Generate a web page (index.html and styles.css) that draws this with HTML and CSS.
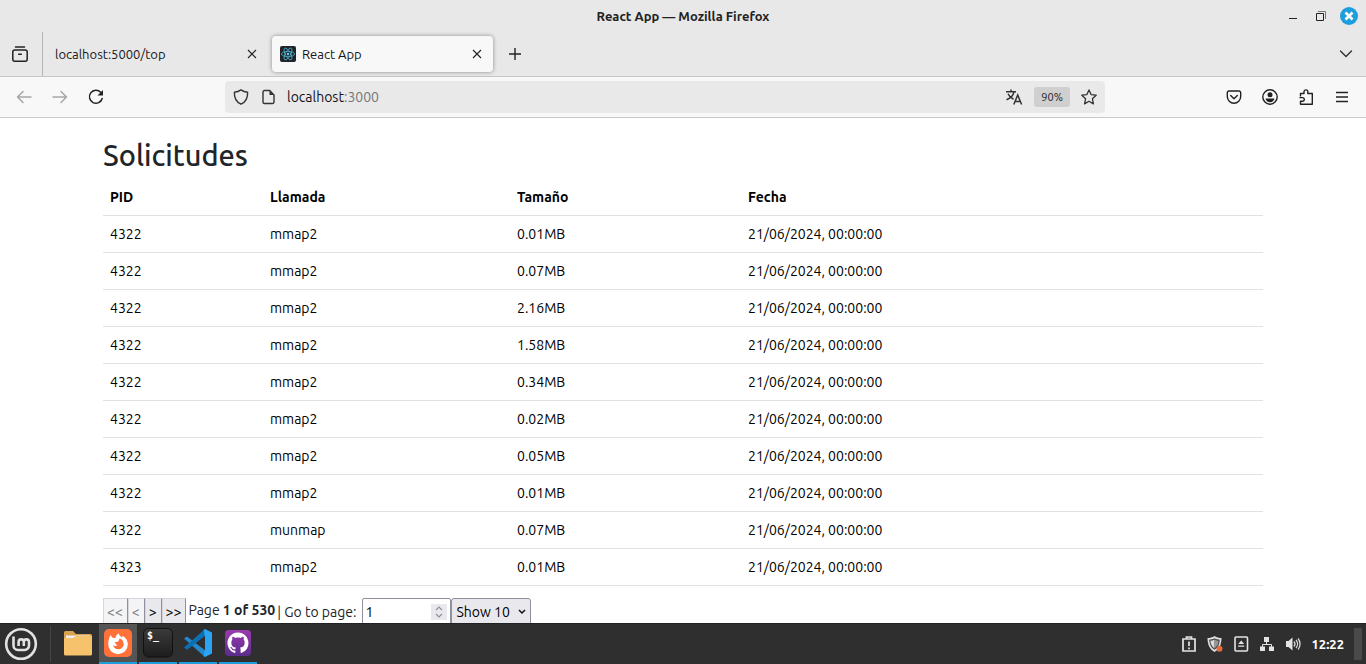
FILE: index.html
```html
<!DOCTYPE html>
<html lang="es">
<head>
<meta charset="utf-8">
<title>React App</title>
<link rel="stylesheet" href="styles.css">
</head>
<body>
<div class="desktop">
  <header class="titlebar">
    <span class="window-title">React App — Mozilla Firefox</span>
    <div class="window-controls">
      <button class="window-btn" aria-label="Minimize"><svg width="18" height="18" viewBox="0 0 18 18"><path d="M5 11.500h8" stroke="#222"/></svg></button>
      <button class="window-btn" aria-label="Restore"><svg width="18" height="18" viewBox="0 0 18 18" fill="none"><path d="M6 4.500h7.500V12" stroke="#777"/><path d="M4.500 6.500h7v7h-7z" stroke="#222"/></svg></button>
      <button class="window-btn" aria-label="Close"><svg width="18" height="18" viewBox="0 0 18 18"><circle cx="9" cy="9" r="9" fill="#1f9ede"/><path d="M5.500 5.500l7 7M12.500 5.500l-7 7" stroke="#fff" stroke-width="2.600"/></svg></button>
    </div>
  </header>

  <nav class="tabbar" aria-label="Tabs">
    <button class="view-btn" aria-label="Firefox View"><svg width="16" height="16" viewBox="0 0 16 16" fill="none" stroke="#222" stroke-width="1.500" stroke-linecap="round"><rect x=".8" y="4" width="14.400" height="11.200" rx="2"/><path d="M3.500 1h9M6.700 8.200h2.600"/></svg></button>
    <div class="tab">
      <span class="tab-label">localhost:5000/top</span>
      <button class="icon-btn" aria-label="Close tab"><svg width="10" height="10" viewBox="0 0 10 10"><path d="M1 1l8 8M9 1L1 9" stroke="#222" stroke-width="1.100"/></svg></button>
    </div>
    <div class="tab tab-active">
      <svg width="16" height="16" viewBox="0 0 16 16"><rect width="16" height="16" rx="2" fill="#20232a"/><g fill="none" stroke="#4fb4cf" stroke-width=".8"><ellipse cx="8" cy="8" rx="6.600" ry="2.600"/><ellipse cx="8" cy="8" rx="6.600" ry="2.600" transform="rotate(60 8 8)"/><ellipse cx="8" cy="8" rx="6.600" ry="2.600" transform="rotate(120 8 8)"/></g><circle cx="8" cy="8" r="1.200" fill="#61dafb"/></svg>
      <span class="tab-label">React App</span>
      <button class="icon-btn" aria-label="Close tab"><svg width="10" height="10" viewBox="0 0 10 10"><path d="M1 1l8 8M9 1L1 9" stroke="#222" stroke-width="1.100"/></svg></button>
    </div>
    <button class="icon-btn new-tab" aria-label="New tab"><svg width="12" height="12" viewBox="0 0 12 12"><path d="M6 0v12M0 6h12" stroke="#222" stroke-width="1.400"/></svg></button>
    <button class="icon-btn list-tabs" aria-label="List all tabs"><svg width="14" height="8" viewBox="0 0 14 8" fill="none"><path d="M1.500 1L7 6.500 12.500 1" stroke="#333" stroke-width="1.400" stroke-linecap="round"/></svg></button>
  </nav>

  <div class="navbar">
    <div class="nav-left">
      <button class="icon-btn" aria-label="Back" disabled><svg width="16" height="14" viewBox="0 0 16 14" fill="none" stroke="#a6a6a6" stroke-width="1.500" stroke-linecap="round" stroke-linejoin="round"><path d="M15 7H1.500M7 1.500L1.500 7 7 12.500"/></svg></button>
      <button class="icon-btn" aria-label="Forward" disabled><svg width="16" height="14" viewBox="0 0 16 14" fill="none" stroke="#a6a6a6" stroke-width="1.500" stroke-linecap="round" stroke-linejoin="round"><path d="M1 7h13.500M9 1.500L14.500 7 9 12.500"/></svg></button>
      <button class="icon-btn" aria-label="Reload"><svg width="16" height="16" viewBox="0 0 16 16" fill="none"><path d="M14.200 9.500A6.500 6.500 0 1 1 12.700 3.300" stroke="#222" stroke-width="1.500" stroke-linecap="round"/><path d="M15 1v5.500H9.500z" fill="#222"/></svg></button>
    </div>
    <div class="urlbar">
      <svg width="16" height="16" viewBox="0 0 16 16" fill="none" stroke="#333" stroke-width="1.400" stroke-linejoin="round"><path d="M8 .9c2 1.500 4.200 2.200 6.600 2.300.3 5.300-1.800 9.700-6.600 12C3.200 12.900 1.100 8.500 1.400 3.200 3.800 3.100 6 2.400 8 .9z"/></svg>
      <svg width="16" height="16" viewBox="0 0 16 16"><path d="M4.500 1.500h5.200L14 6v7a1.500 1.500 0 0 1-1.500 1.500h-8A1.500 1.500 0 0 1 3 13V3A1.500 1.500 0 0 1 4.500 1.500z" fill="none" stroke="#333" stroke-width="1.400"/><path d="M9.500 1.500V6H14z" fill="#333"/></svg>
      <span class="url">localhost<span class="port">:3000</span></span>
      <button class="icon-btn" aria-label="Translate"><svg width="18" height="16" viewBox="0 0 18 16" fill="none" stroke="#333" stroke-width="1.500"><path d="M1 2.800h10M6 .5v2.300M9 2.800C8.200 6.500 5.500 9.200 1.500 10.800M3 4.800c1 2.400 3 4.300 5.500 5.500"/><path d="M8.800 15.500L12.700 6l3.900 9.500M10.200 12.500h5"/></svg></button>
      <button class="zoom-level">90%</button>
      <button class="icon-btn bookmark" aria-label="Bookmark"><svg width="16" height="16" viewBox="0 0 16 16" fill="none" stroke="#333" stroke-width="1.300" stroke-linejoin="round"><path d="M8 .9l2.100 4.700 5.100.6-3.800 3.500 1 5.200L8 12.300 3.600 14.900l1-5.200L.8 6.200l5.100-.6z"/></svg></button>
    </div>
    <div class="nav-right">
      <button class="icon-btn" aria-label="Pocket"><svg width="16" height="16" viewBox="0 0 16 16" fill="none" stroke="#222" stroke-width="1.400" stroke-linecap="round" stroke-linejoin="round"><path d="M3 2h10a1.700 1.700 0 0 1 1.700 1.700V7.500a6.700 6.700 0 0 1-13.400 0V3.700A1.700 1.700 0 0 1 3 2zM4.700 6.500L8 9.700l3.300-3.200"/></svg></button>
      <button class="icon-btn" aria-label="Account"><svg width="16" height="16" viewBox="0 0 16 16"><circle cx="8" cy="8" r="7.200" fill="none" stroke="#222" stroke-width="1.400"/><circle cx="8" cy="5.800" r="2.500" fill="#222"/><path d="M3.500 9.500h9c-.4 2.400-2.200 3.800-4.500 3.800S3.900 11.900 3.500 9.500z" fill="#222"/></svg></button>
      <button class="icon-btn" aria-label="Extensions"><svg width="16" height="16" viewBox="0 0 16 16" fill="none" stroke="#222" stroke-width="1.400" stroke-linejoin="round"><path d="M2.500 7.500V4.500H6V2.800a1.900 1.900 0 0 1 3.800 0v1.700h4.500v10.700H2.500v-3h2a1.800 1.800 0 0 0 0-3.600H1.500"/></svg></button>
      <button class="icon-btn" aria-label="Menu"><svg width="16" height="16" viewBox="0 0 16 16"><path d="M2 3.500h12M2 8h12M2 12.500h12" stroke="#222" stroke-width="1.300"/></svg></button>
    </div>
  </div>

  <main class="page">
    <div class="container">
      <h2 class="heading">Solicitudes</h2>
      <table class="calls">
        <colgroup><col class="col-pid"><col class="col-call"><col class="col-size"><col></colgroup>
        <thead><tr><th>PID</th><th>Llamada</th><th>Tamaño</th><th>Fecha</th></tr></thead>
        <tbody>
          <tr><td>4322</td><td>mmap2</td><td>0.01MB</td><td>21/06/2024, 00:00:00</td></tr>
          <tr><td>4322</td><td>mmap2</td><td>0.07MB</td><td>21/06/2024, 00:00:00</td></tr>
          <tr><td>4322</td><td>mmap2</td><td>2.16MB</td><td>21/06/2024, 00:00:00</td></tr>
          <tr><td>4322</td><td>mmap2</td><td>1.58MB</td><td>21/06/2024, 00:00:00</td></tr>
          <tr><td>4322</td><td>mmap2</td><td>0.34MB</td><td>21/06/2024, 00:00:00</td></tr>
          <tr><td>4322</td><td>mmap2</td><td>0.02MB</td><td>21/06/2024, 00:00:00</td></tr>
          <tr><td>4322</td><td>mmap2</td><td>0.05MB</td><td>21/06/2024, 00:00:00</td></tr>
          <tr><td>4322</td><td>mmap2</td><td>0.01MB</td><td>21/06/2024, 00:00:00</td></tr>
          <tr><td>4322</td><td>munmap</td><td>0.07MB</td><td>21/06/2024, 00:00:00</td></tr>
          <tr><td>4323</td><td>mmap2</td><td>0.01MB</td><td>21/06/2024, 00:00:00</td></tr>
        </tbody>
      </table>
      <div class="pagination">
        <button class="page-btn" disabled>&lt;&lt;</button>
        <button class="page-btn" disabled>&lt;</button>
        <button class="page-btn">&gt;</button>
        <button class="page-btn">&gt;&gt;</button>
        <span class="page-count">Page <strong>1 of 530</strong></span>
        <label class="goto" for="goto">| Go to page:</label>
        <span class="number-field">
          <input class="number-input" id="goto" type="number" value="1">
          <svg class="spinner" width="16" height="16" viewBox="0 0 16 16" fill="none"><path d="M0 0h16v16H0z" fill="#e9e9ed"/><path d="M5 6l3-3 3 3M5 10l3 3 3-3" stroke="#8f8f9d" stroke-width="1.200"/></svg>
        </span>
        <span class="select-field">
          <select class="page-size" aria-label="Rows per page"><option>Show 10</option><option>Show 20</option><option>Show 30</option></select>
          <svg class="caret" width="8" height="6" viewBox="0 0 8 6" fill="none"><path d="M1 1l3 3 3-3" stroke="#111" stroke-width="1.500"/></svg>
        </span>
      </div>
    </div>
  </main>

  <footer class="taskbar">
    <button class="start-btn" aria-label="Menu"><svg width="34" height="34" viewBox="0 0 34 34" fill="none" stroke="#e2e2e2"><circle cx="17" cy="17" r="14.800" stroke-width="2.600"/><path d="M9.500 9.500V18.500a4.500 4.500 0 0 0 4.500 4.500h6.500a4.500 4.500 0 0 0 4.500-4.500V15a2.600 2.600 0 0 0-5.200 0v4M19.800 15a2.600 2.600 0 0 0-5.200 0v4" stroke-width="2.600"/></svg></button>
    <div class="launchers">
      <button class="launcher" aria-label="Files"><svg width="32" height="32" viewBox="0 0 32 32"><path d="M2 5.500A1.500 1.500 0 0 1 3.500 4H11l3 3h14.500A1.500 1.500 0 0 1 30 8.500V14H2z" fill="#d9a34e"/><path d="M4 8.500h24v4H4z" fill="#eee"/><path d="M2 11h9l3-2h16v18a1.500 1.500 0 0 1-1.500 1.500h-25A1.500 1.500 0 0 1 2 27z" fill="#f6c26b"/></svg></button>
      <button class="launcher running focused" aria-label="Firefox"><svg width="32" height="32" viewBox="0 0 32 32"><rect x="2" y="2" width="28" height="28" rx="5" fill="#ff7139"/><path d="M8.500 8l2 2.800 3 .2c.3-2.300 1.300-3.700 3.200-4.800.3 2 1.800 3 3.200 4.200l.9-1.700c3.200 2.200 5 5 5 8.500A9.800 9.800 0 0 1 16 27.200 9.900 9.900 0 0 1 6.200 17.300c0-3.200.8-6.300 2.300-9.300z" fill="#fff"/><path d="M17.500 11.500c2.800.7 4.200 3 4.200 5.500 0 3.200-2.500 5.300-5.500 5.300-2.800 0-4.700-1.700-5.200-4 1.600 1 3.200.9 4.500-.3-1.800-.5-2.600-1.600-2.300-3.200 1.300.5 2.500.2 3.300-.6z" fill="#ff7139"/></svg></button>
      <button class="launcher running" aria-label="Terminal"><svg width="32" height="32" viewBox="0 0 32 32"><defs><linearGradient id="term" x2="0" y2="1"><stop stop-color="#3b3b3b"/><stop offset="1" stop-color="#1d1d1d"/></linearGradient></defs><rect x="1.500" y="1.500" width="29" height="28.500" rx="5" fill="url(#term)" stroke="#111"/><text class="prompt" x="5" y="12">$_</text></svg></button>
      <button class="launcher running" aria-label="Visual Studio Code"><svg width="32" height="32" viewBox="0 0 32 32"><path d="M2 11.500l3-2 18 13.700V30z" fill="#2489ca"/><path d="M2 20.500l3 2.200L23 9V2z" fill="#0b6fb3"/><path d="M23 2l7 3.500v21L23 30l-1.500-1 1.500-6.500v-13L21.500 3z" fill="#2aa4f4"/></svg></button>
      <button class="launcher running" aria-label="GitHub Desktop"><svg width="32" height="32" viewBox="0 0 32 32"><defs><linearGradient id="gh" x2="0" y2="1"><stop stop-color="#9b3bb0"/><stop offset="1" stop-color="#5a2c8c"/></linearGradient></defs><rect x="3" y="3" width="26" height="26" rx="4" fill="url(#gh)"/><path transform="translate(5.500 5.500) scale(1.310)" fill="#fff" d="M8 0C3.580 0 0 3.580 0 8c0 3.540 2.290 6.530 5.470 7.590.4.070.55-.17.55-.38 0-.19-.01-.82-.01-1.490-2.010.37-2.530-.49-2.690-.94-.09-.23-.48-.94-.82-1.130-.28-.15-.68-.52-.01-.53.63-.01 1.080.58 1.230.82.72 1.210 1.870.87 2.330.66.070-.52.28-.87.51-1.070-1.780-.2-3.640-.89-3.640-3.950 0-.87.31-1.590.82-2.150-.08-.2-.36-1.020.08-2.120 0 0 .67-.21 2.200.82.64-.18 1.320-.27 2-.27s1.360.09 2 .27c1.530-1.040 2.200-.82 2.200-.82.44 1.100.16 1.920.08 2.120.51.56.82 1.270.82 2.150 0 3.070-1.870 3.750-3.650 3.950.29.25.54.73.54 1.480 0 1.070-.01 1.930-.01 2.200 0 .21.15.46.55.38A8.010 8.010 0 0 0 16 8c0-4.420-3.580-8-8-8z"/></svg></button>
    </div>
    <div class="tray">
      <svg width="16" height="16" viewBox="0 0 16 16" fill="none" stroke="#e4e4e4" stroke-width="1.700"><path d="M2 3h12v12H2zM5.500 3V1h5v2M8 5.500v4.500M8 11.500v1.700"/></svg>
      <svg width="16" height="16" viewBox="0 0 16 16"><path d="M7.500 0c2.300 1.500 4.700 2 7 2C14.500 8 12.700 13 7.500 16 2.300 13 .5 8 .5 2 2.800 2 5.200 1.500 7.500 0z" fill="#ddd"/><path d="M7.500 2.200c1.800 1 3.500 1.400 5.300 1.500-.2 4.300-1.700 7.800-5.300 10.100C3.900 11.500 2.400 8 2.200 3.700 4 3.600 5.700 3.200 7.500 2.200z" fill="#444"/><path d="M7.500 3.500v9C4.800 10.500 3.600 8 3.300 4.800 4.900 4.700 6.300 4.300 7.500 3.500z" fill="#ddd"/><path d="M7.500 3.500v9c2.700-2 3.900-4.500 4.200-7.700-1.600-.1-3-.5-4.200-1.300z" fill="#999"/><circle cx="12.500" cy="12.800" r="3" fill="#e66b38"/></svg>
      <svg width="16" height="16" viewBox="0 0 16 16"><rect x="2" y="1" width="12.500" height="14" rx="1" fill="none" stroke="#e4e4e4" stroke-width="1.600"/><path d="M8.200 4.500l3 3.500h-6zM5.200 9.500h6v1.300h-6z" fill="#e4e4e4"/></svg>
      <svg width="16" height="16" viewBox="0 0 16 16" fill="#e4e4e4"><path d="M5 1h5v5H5zM1 10.500h5V15H1zM10 10.500h5V15h-5z"/><path d="M7.500 5v3.500M3.500 11V8.500h9V11" fill="none" stroke="#e4e4e4"/></svg>
      <svg width="16" height="16" viewBox="0 0 16 16"><path d="M1 5h2.500L7.500 1.500v13L3.500 11H1z" fill="#e4e4e4"/><path d="M9 5.500c1.200 1.500 1.200 3.500 0 5M11 4c2 2.300 2 5.700 0 8M13 2.500c2.700 3 2.700 8 0 11" fill="none" stroke="#d8d8d8" stroke-width="1.300"/></svg>
      <time class="clock">12:22</time>
      <span class="show-desktop"></span>
    </div>
  </footer>
</div>
</body>
</html>
```
FILE: styles.css
```css
* { box-sizing: border-box; }

body {
  margin: 0;
  font-family: Ubuntu, "Noto Sans", sans-serif;
  font-size: 14px;
  color: #212529;
}

button, input, select { font: inherit; color: inherit; margin: 0; }
svg { display: block; flex: none; }

.desktop { display: flex; flex-direction: column; height: 100vh; background: #fff; }

.titlebar {
  display: grid;
  grid-template-columns: 1fr auto 1fr;
  align-items: center;
  flex: none;
  height: 32px;
  padding: 0 8px;
  background: #e8e8e8;
}
.window-title { grid-column: 2; font-size: 13px; font-weight: 600; color: #222; }
.window-controls { display: flex; justify-content: flex-end; gap: 10px; }
.window-btn, .icon-btn { display: flex; align-items: center; justify-content: center; padding: 0; border: 0; background: none; }

.tabbar {
  display: flex;
  align-items: center;
  flex: none;
  height: 45px;
  background: #e8e8e8;
  border-bottom: 1px solid #c6c6c6;
  font-size: 13px;
  color: #15141a;
}
.view-btn {
  display: flex;
  align-items: center;
  align-self: stretch;
  width: 43px;
  padding: 0 0 0 12px;
  border: 0;
  border-right: 1px solid #b5b5b5;
  background: none;
}
.tab { display: flex; align-items: center; gap: 6px; width: 229px; height: 36px; padding: 0 15px 0 12px; }
.tab-active {
  width: 221px;
  padding: 0 11px 0 8px;
  border-radius: 4px;
  background: #f8f8f8;
  box-shadow: 0 0 4px rgba(0, 0, 0, 0.4);
}
.tab-label { flex: 1; }
.new-tab { margin-left: 16px; }
.list-tabs { margin-left: auto; margin-right: 13px; }

.navbar {
  display: flex;
  align-items: center;
  flex: none;
  height: 41px;
  padding: 0 16px;
  background: #f8f8f8;
  border-bottom: 1px solid #c9c9c9;
}
.nav-left { display: flex; align-items: center; gap: 20px; width: 209px; }
.urlbar {
  display: flex;
  align-items: center;
  gap: 11px;
  flex: 1;
  height: 32px;
  padding: 0 8px;
  border-radius: 4px;
  background: #e9e9e9;
}
.url { flex: 1; color: #15141a; }
.port { color: #77767b; }
.zoom-level { height: 20px; padding: 0 7px; border: 0; border-radius: 3px; background: #cfcfcf; font-size: 11px; }
.nav-right { display: flex; justify-content: flex-end; gap: 20px; width: 245px; }

.page { flex: 1; min-height: 0; overflow: hidden; padding: 19px 103px 0; }
.heading { margin: 0 0 6px; font-size: 29px; font-weight: 500; line-height: 36px; }
.calls { width: 100%; border-collapse: collapse; table-layout: fixed; line-height: 22px; color: #000; }
.col-pid { width: 160px; }
.col-call { width: 247px; }
.col-size { width: 231px; }
.calls th, .calls td { padding: 7px; border-bottom: 1px solid #dee2e6; text-align: left; }

.pagination { display: flex; align-items: center; height: 28px; margin-top: 12px; }
.page-btn {
  align-self: stretch;
  padding: 0 4px 0 3px;
  border: 1px solid #8f8f9d;
  border-left-color: #d5d5dc;
  border-top-color: #d5d5dc;
  background: #e9e9ed;
  color: #000;
}
.page-btn:disabled { background: #f4f4f6; color: #7d7d80; }
.page-count { align-self: flex-start; padding: 0 2px; line-height: 24px; }
.goto { margin-right: 6px; }
.number-field, .select-field { display: grid; align-items: center; align-self: stretch; }
.number-input, .spinner, .page-size, .caret { grid-area: 1 / 1; }
.number-input {
  width: 89px;
  height: 28px;
  padding: 0 2px;
  border: 1px solid #8f8f9d;
  border-radius: 2px;
  background: #fff;
  color: #000;
  appearance: textfield;
}
.number-input::-webkit-inner-spin-button { display: none; }
.spinner, .caret { justify-self: end; pointer-events: none; }
.spinner { margin-right: 4px; }
.page-size {
  width: 80px;
  height: 28px;
  padding: 0 4px;
  border: 1px solid #8f8f9d;
  border-radius: 3px;
  background: #e9e9ed;
  color: #000;
  appearance: none;
}
.caret { margin-right: 5px; }

.taskbar {
  display: flex;
  align-items: center;
  flex: none;
  height: 41px;
  border-top: 1px solid #222;
  background: #2f2f2f;
}
.start-btn {
  display: flex;
  align-items: center;
  width: 51px;
  height: 36px;
  padding: 0 0 0 4px;
  border: 0;
  border-right: 1px solid #444;
  background: none;
}
.launchers { display: flex; align-self: stretch; gap: 2px; padding-left: 8px; }
.launcher {
  display: flex;
  align-items: center;
  justify-content: center;
  width: 38px;
  padding: 0;
  border: 0;
  border-bottom: 2px solid transparent;
  background: none;
}
.running { border-bottom-color: #1f9ede; }
.focused { background: #555; }
.prompt { font: bold 10px "DejaVu Sans Mono", monospace; fill: #fff; }
.tray { display: flex; align-items: center; gap: 10px; margin-left: auto; padding-right: 4px; }
.clock { font-size: 13px; font-weight: 700; color: #fff; }
.show-desktop { width: 8px; height: 32px; background: #4a4a4a; }
```
